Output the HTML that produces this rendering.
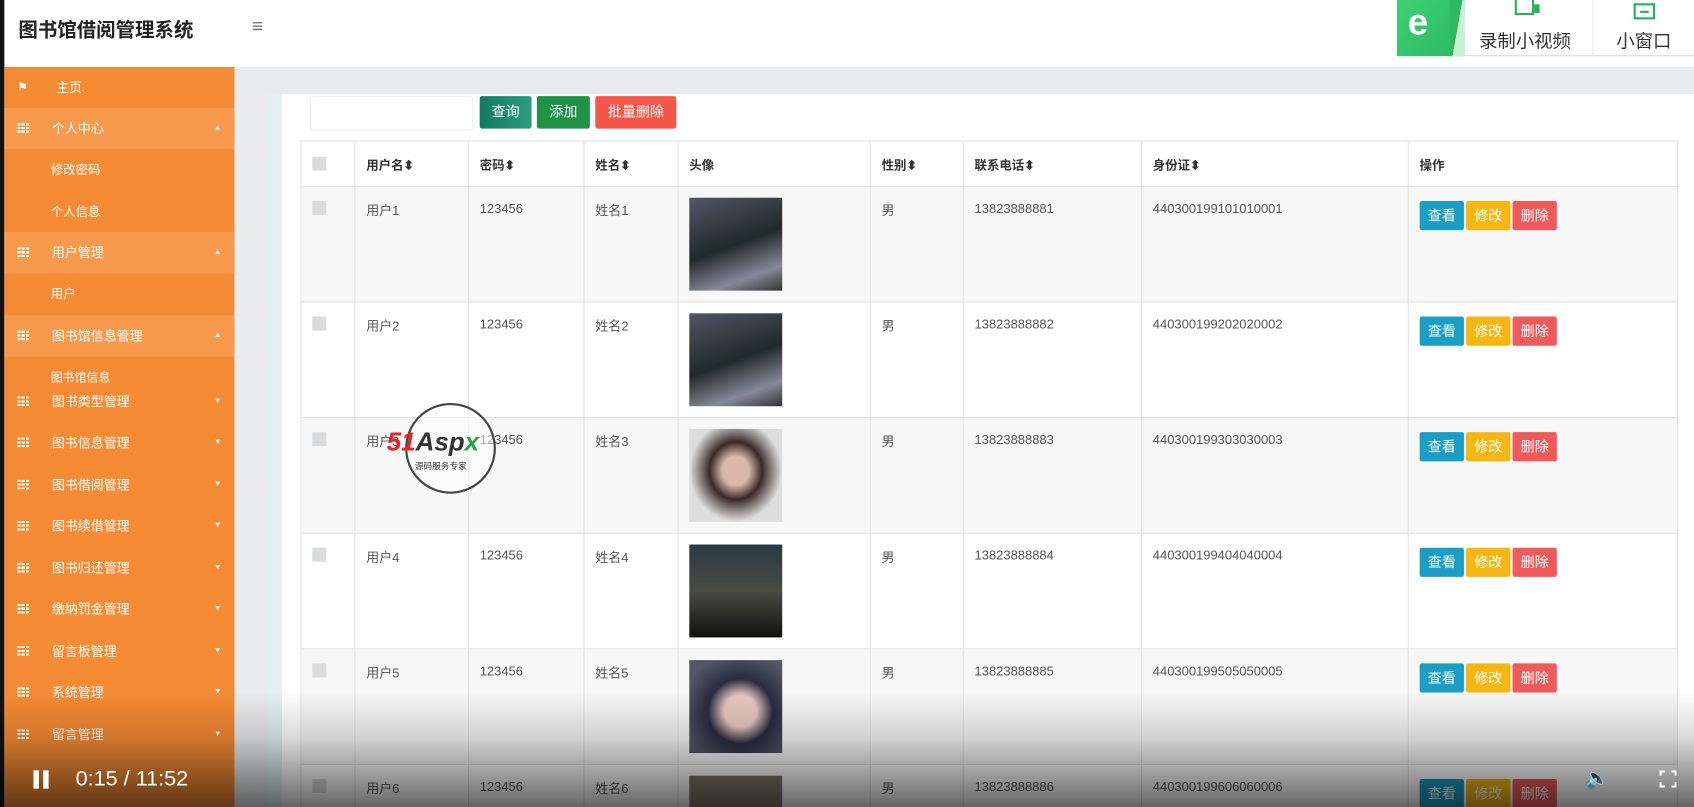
<!DOCTYPE html>
<html><head><meta charset="utf-8"><style>
*{margin:0;padding:0;box-sizing:border-box}
html,body{width:1694px;height:807px;overflow:hidden;background:#fff}
#w{position:absolute;left:0;top:0;width:1568px;height:747px;transform:scale(1.0804);transform-origin:0 0;font-family:"Liberation Sans","Noto Sans CJK SC",sans-serif;overflow:hidden;background:#e9ebec}
.a{position:absolute}
.hdr{left:0;top:0;width:1568px;height:62px;background:#fff}
.sb{left:4px;top:62px;width:213px;height:685px;background:#f68b35}
.it{position:absolute;left:0;width:213px;height:38px;color:#fff;font-size:12px;line-height:38px}
.it.l{background:#f79a4e}
.it .ic{position:absolute;left:12px;top:14px;width:11px;height:9px;background:repeating-linear-gradient(90deg,#fff 0 3px,transparent 3px 4px);-webkit-mask:repeating-linear-gradient(0deg,#000 0 2px,transparent 2px 3.5px)}
.it .t{position:absolute;left:44px}
.it .c{position:absolute;right:12px;font-size:7px}
.sub{position:absolute;left:43px;color:#fff;font-size:11.5px}
table{border-collapse:collapse;position:absolute;left:278px;top:130px;width:1275px;font-size:12px;color:#555;table-layout:fixed}
td,th{border:1px solid #e2e2e2;vertical-align:top;text-align:left;padding:13px 10px 0;overflow:hidden}
th{height:42px;font-weight:600;color:#333;font-size:11.5px;padding-top:14px}
td{height:107px}
tr:nth-child(even) td{background:#f7f7f7}
.cb{display:inline-block;width:13px;height:13px;background:#d9dbdd}
.img{width:86px;height:86px;margin-top:-3px}
.b{display:inline-block;height:27px;line-height:27px;color:#fff;font-size:13px;width:41px;text-align:center;margin-right:2px;border-radius:2px}
</style></head><body><div id="w">
<div class="a hdr"></div>
<div class="a" style="left:0;top:0;width:4px;height:747px;background:#111"></div>
<div class="a" style="left:17px;top:14px;font-size:18px;font-weight:bold;color:#222">图书馆借阅管理系统</div>
<div class="a" style="left:233px;top:14px;font-size:18px;color:#777">≡</div>
<div class="a" style="left:1293px;top:0;width:62px;height:52px;background:linear-gradient(135deg,#3bd074,#2fb862)"></div>
<div class="a" style="left:1303px;top:2px;font-size:34px;color:#fff;font-weight:bold">e</div>
<div class="a" style="left:1355px;top:0;width:213px;height:52px;background:#fff;border-bottom:1px solid #ddd"></div>
<div class="a" style="left:1342px;top:0;width:14px;height:52px;background:linear-gradient(100deg,#2fb862 50%,#c8f1d8 50%)"></div>
<div class="a" style="left:1474px;top:0;width:1px;height:52px;background:#e4e4e4"></div>
<div class="a" style="left:1402px;top:0;width:18px;height:14px;border:2px solid #22b35e;border-top:0"></div>
<div class="a" style="left:1420px;top:4px;width:5px;height:8px;background:#22b35e"></div>
<div class="a" style="left:1369px;top:24px;font-size:17px;color:#333">录制小视频</div>
<div class="a" style="left:1512px;top:3px;width:20px;height:15px;border:2px solid #22b35e"></div>
<div class="a" style="left:1518px;top:10px;width:8px;height:2px;background:#22b35e"></div>
<div class="a" style="left:1496px;top:24px;font-size:17px;color:#333">小窗口</div>

<div class="a sb">
<div class="it" style="top:0"><span style="position:absolute;left:12px;font-size:11px">⚑</span><span class="t" style="left:48px">主页</span></div>
<div class="it l" style="top:38px"><span class="ic"></span><span class="t">个人中心</span><span class="c">▲</span></div>
<div class="sub" style="top:87px">修改密码</div>
<div class="sub" style="top:126px">个人信息</div>
<div class="it l" style="top:153px"><span class="ic"></span><span class="t">用户管理</span><span class="c">▲</span></div>
<div class="sub" style="top:202px">用户</div>
<div class="it l" style="top:230px"><span class="ic"></span><span class="t">图书馆信息管理</span><span class="c">▲</span></div>
<div class="sub" style="top:279px;font-size:11px">图书馆信息</div>
<div class="it" style="top:291px"><span class="ic"></span><span class="t">图书类型管理</span><span class="c">▼</span></div>
<div class="it" style="top:329px"><span class="ic"></span><span class="t">图书信息管理</span><span class="c">▼</span></div>
<div class="it" style="top:368px"><span class="ic"></span><span class="t">图书借阅管理</span><span class="c">▼</span></div>
<div class="it" style="top:406px"><span class="ic"></span><span class="t">图书续借管理</span><span class="c">▼</span></div>
<div class="it" style="top:445px"><span class="ic"></span><span class="t">图书归还管理</span><span class="c">▼</span></div>
<div class="it" style="top:483px"><span class="ic"></span><span class="t">缴纳罚金管理</span><span class="c">▼</span></div>
<div class="it" style="top:522px"><span class="ic"></span><span class="t">留言板管理</span><span class="c">▼</span></div>
<div class="it" style="top:560px"><span class="ic"></span><span class="t">系统管理</span><span class="c">▼</span></div>
<div class="it" style="top:599px"><span class="ic"></span><span class="t">留言管理</span><span class="c">▼</span></div>
</div>

<div class="a" style="left:248px;top:87px;width:13px;height:660px;background:#e4f1f0"></div>
<div class="a" style="left:261px;top:87px;width:1307px;height:660px;background:#fff"></div>
<div class="a" style="left:287px;top:89px;width:151px;height:32px;border:1px solid #eee;border-radius:3px"></div>
<div class="a" style="left:444px;top:89px;width:48px;height:30px;background:linear-gradient(90deg,#127a63,#2a9d7d);color:#fff;font-size:13px;line-height:30px;text-align:center;border-radius:2px">查询</div>
<div class="a" style="left:497px;top:89px;width:49px;height:30px;background:#1f9447;color:#fff;font-size:13px;line-height:30px;text-align:center;border-radius:2px">添加</div>
<div class="a" style="left:551px;top:89px;width:75px;height:30px;background:#f5564a;color:#fff;font-size:13px;line-height:30px;text-align:center;border-radius:2px">批量删除</div>

<table>
<colgroup><col style="width:50px"><col style="width:105px"><col style="width:107px"><col style="width:87px"><col style="width:178px"><col style="width:86px"><col style="width:165px"><col style="width:247px"><col></colgroup>
<tr><th><span class="cb"></span></th><th>用户名⬍</th><th>密码⬍</th><th>姓名⬍</th><th>头像</th><th>性别⬍</th><th>联系电话⬍</th><th>身份证⬍</th><th>操作</th></tr>
<tr><td><span class="cb"></span></td><td>用户1</td><td>123456</td><td>姓名1</td><td><div class="img" style="background:linear-gradient(160deg,#556,#1f2a2a 50%,#889 80%,#333)"></div></td><td>男</td><td>13823888881</td><td>440300199101010001</td><td><span class="b" style="background:#1a9ec4">查看</span><span class="b" style="background:#f6b614">修改</span><span class="b" style="background:#f05a5a">删除</span></td></tr>
<tr><td><span class="cb"></span></td><td>用户2</td><td>123456</td><td>姓名2</td><td><div class="img" style="background:linear-gradient(160deg,#556,#1f2a2a 50%,#889 80%,#333)"></div></td><td>男</td><td>13823888882</td><td>440300199202020002</td><td><span class="b" style="background:#1a9ec4">查看</span><span class="b" style="background:#f6b614">修改</span><span class="b" style="background:#f05a5a">删除</span></td></tr>
<tr><td><span class="cb"></span></td><td>用户3</td><td>123456</td><td>姓名3</td><td><div class="img" style="background:radial-gradient(ellipse at 50% 45%,#d9b8aa 20%,#3a2a28 40%,#ddd 70%)"></div></td><td>男</td><td>13823888883</td><td>440300199303030003</td><td><span class="b" style="background:#1a9ec4">查看</span><span class="b" style="background:#f6b614">修改</span><span class="b" style="background:#f05a5a">删除</span></td></tr>
<tr><td><span class="cb"></span></td><td>用户4</td><td>123456</td><td>姓名4</td><td><div class="img" style="background:linear-gradient(180deg,#2a3a44,#4a4a44 50%,#111)"></div></td><td>男</td><td>13823888884</td><td>440300199404040004</td><td><span class="b" style="background:#1a9ec4">查看</span><span class="b" style="background:#f6b614">修改</span><span class="b" style="background:#f05a5a">删除</span></td></tr>
<tr><td><span class="cb"></span></td><td>用户5</td><td>123456</td><td>姓名5</td><td><div class="img" style="background:radial-gradient(ellipse at 55% 55%,#e8c8c0 22%,#2a2a40 45%,#556 80%)"></div></td><td>男</td><td>13823888885</td><td>440300199505050005</td><td><span class="b" style="background:#1a9ec4">查看</span><span class="b" style="background:#f6b614">修改</span><span class="b" style="background:#f05a5a">删除</span></td></tr>
<tr><td><span class="cb"></span></td><td>用户6</td><td>123456</td><td>姓名6</td><td><div class="img" style="background:#776"></div></td><td>男</td><td>13823888886</td><td>440300199606060006</td><td><span class="b" style="background:#1a9ec4">查看</span><span class="b" style="background:#f6b614">修改</span><span class="b" style="background:#f05a5a">删除</span></td></tr>
</table>

<div class="a" style="left:375px;top:373px;width:84px;height:84px;border:2px solid #444;border-radius:50%;background:rgba(255,255,255,.5)"></div>
<div class="a" style="left:358px;top:396px;font-size:24px;font-weight:bold;font-style:italic;color:#333"><span style="color:#e3262b">51</span>Asp<span style="color:#2aa34a">x</span></div>
<div class="a" style="left:384px;top:426px;font-size:8px;color:#333">源码服务专家</div>

<div class="a" style="left:0;top:640px;width:1568px;height:107px;background:linear-gradient(180deg,rgba(0,0,0,0),rgba(0,0,0,.15) 40%,rgba(0,0,0,.6))"></div>
<div class="a" style="left:31px;top:713px;width:5px;height:17px;background:#fff"></div>
<div class="a" style="left:40px;top:713px;width:5px;height:17px;background:#fff"></div>
<div class="a" style="left:70px;top:710px;font-size:20px;color:#fff">0:15 / 11:52</div>
<div class="a" style="left:1467px;top:710px;font-size:18px;color:#ddd">🔈</div>
<div class="a" style="left:1536px;top:713px;width:16px;height:16px;border:2px solid #fff;-webkit-mask:linear-gradient(#000,#000) 0 0/5px 5px no-repeat,linear-gradient(#000,#000) 100% 0/5px 5px no-repeat,linear-gradient(#000,#000) 0 100%/5px 5px no-repeat,linear-gradient(#000,#000) 100% 100%/5px 5px no-repeat"></div>
</div></body></html>
